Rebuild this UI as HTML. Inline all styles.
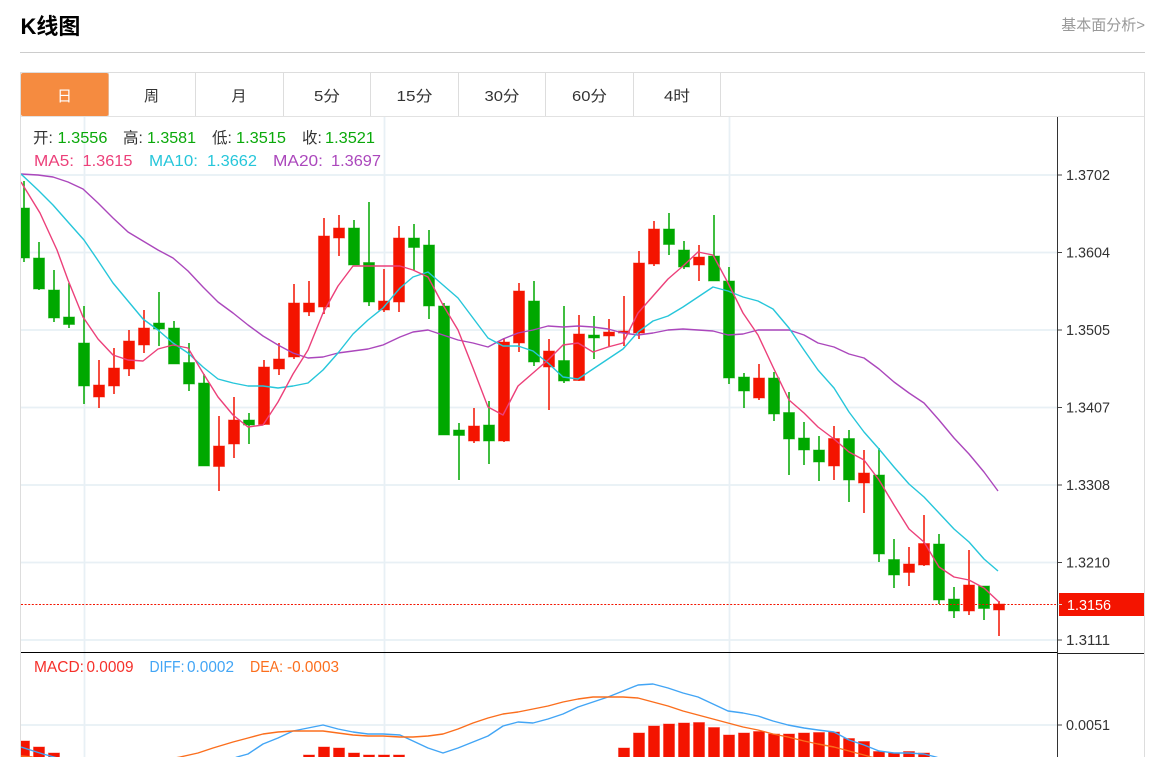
<!DOCTYPE html>
<html lang="zh"><head><meta charset="utf-8"><title>K线图</title>
<style>
html,body{margin:0;padding:0;background:#fff;width:1171px;height:757px;overflow:hidden}
svg{display:block;font-family:"Liberation Sans","Noto Sans CJK SC",sans-serif}
.tab{font-size:15px;fill:#333;text-anchor:middle}
.ax{font-size:14.5px;fill:#333}
.i{font-size:15.5px}
.g{fill:#0aa90a}.k{fill:#333}.p{fill:#ec407a}.c{fill:#26c6da}.u{fill:#ab47bc}.r{fill:#f5302a}.b{fill:#42a5f5}.o{fill:#fb6e1d}
</style></head><body>
<svg width="1171" height="757" viewBox="0 0 1171 757" xmlns="http://www.w3.org/2000/svg">
<defs><clipPath id="cl"><rect x="21" y="117" width="1036" height="640"/></clipPath></defs>
<text x="20.5" y="34" font-size="22" font-weight="bold" fill="#000">K线图</text>
<text x="1145" y="30" font-size="15" fill="#999" text-anchor="end">基本面分析&gt;</text>
<path d="M20 52.5H1145" stroke="#ccc" fill="none"/>

<path d="M20.5 757V72.5H1144.5V757" stroke="#ddd" fill="none"/>
<path d="M21 116.5H1144" stroke="#e2e2e2" fill="none"/>
<path d="M108.5 73V116M195.5 73V116M283.5 73V116M370.5 73V116M458.5 73V116M545.5 73V116M633.5 73V116M720.5 73V116" stroke="#ddd" fill="none"/>
<rect x="21" y="73" width="87.5" height="43" rx="2" fill="#f58b40"/>
<text class="tab" x="64.5" y="101" style="fill:#fff">日</text>
<text class="tab" x="151.5" y="101">周</text>
<text class="tab" x="239" y="101">月</text>
<text class="tab" x="327" y="101" textLength="26" lengthAdjust="spacingAndGlyphs">5分</text>
<text class="tab" x="414.5" y="101" textLength="36" lengthAdjust="spacingAndGlyphs">15分</text>
<text class="tab" x="502" y="101" textLength="35" lengthAdjust="spacingAndGlyphs">30分</text>
<text class="tab" x="589.5" y="101" textLength="35" lengthAdjust="spacingAndGlyphs">60分</text>
<text class="tab" x="677" y="101" textLength="26" lengthAdjust="spacingAndGlyphs">4时</text>

<g stroke="#e8f0f5" stroke-width="1.8" fill="none">
<path d="M21 175H1057M21 252.5H1057M21 330H1057M21 407.5H1057M21 485H1057M21 562.5H1057M21 640H1057M21 725H1057"/>
<path d="M84.5 117V757M384.5 117V757M729.5 117V757"/>
</g>

<g clip-path="url(#cl)">
<path stroke="#f41400" stroke-width="1.5" fill="none" d="M99 360V408M114 348V394M129 330V376M144 310V353M219 416V491M234 397V458M264 360V425M279 343V375M294 284V359M309 281V316M324 218V314M339 215V256M384 269V312M399 226V312M474 408V443M504 338V442M519 283V352M549 339V410M579 315V381M609 319V347M624 296V346M639 251V339M654 221V266M699 245V281M759 364V400M834 426V480M864 450V513M909 547V586M924 515V566M969 550V615M999 601V636"/>
<path stroke="#00a800" stroke-width="1.5" fill="none" d="M24 181V262M39 242V290M54 270V322M69 283V328M84 306V404M159 292V346M174 321V364M189 343V391M204 374V466M249 413V444M354 220V265M369 202V306M414 224V270M429 230V319M444 303V435M459 423V480M489 401V464M534 281V366M564 306V383M594 316V359M669 213V255M684 241V269M714 215V281M729 267V384M744 373V408M774 372V421M789 392V475M804 422V465M819 436V481M849 430V502M879 448V562M894 539V588M939 534V604M954 587V618M984 586V620"/>
<path fill="#f41400" stroke="#f41400" stroke-opacity=".45" d="M93.5 385H104.5V397H93.5ZM108.5 368H119.5V386H108.5ZM123.5 341H134.5V369H123.5ZM138.5 328H149.5V345H138.5ZM213.5 446H224.5V466.5H213.5ZM228.5 420H239.5V444H228.5ZM258.5 367H269.5V424.5H258.5ZM273.5 359H284.5V369H273.5ZM288.5 303H299.5V357H288.5ZM303.5 303H314.5V312H303.5ZM318.5 236H329.5V307H318.5ZM333.5 228H344.5V238H333.5ZM378.5 301H389.5V310H378.5ZM393.5 238H404.5V302H393.5ZM468.5 426H479.5V441H468.5ZM498.5 342H509.5V441H498.5ZM513.5 291H524.5V343H513.5ZM543.5 351H554.5V367H543.5ZM573.5 334H584.5V380.5H573.5ZM603.5 332H614.5V336H603.5ZM618.5 331H629.5V333H618.5ZM633.5 263H644.5V333H633.5ZM648.5 229H659.5V264H648.5ZM693.5 257H704.5V265H693.5ZM753.5 378H764.5V398H753.5ZM828.5 438.5H839.5V466H828.5ZM858.5 473H869.5V483H858.5ZM903.5 564H914.5V572.5H903.5ZM918.5 543.5H929.5V565H918.5ZM963.5 585H974.5V611H963.5ZM993.5 604H1004.5V610H993.5Z"/>
<path fill="#00a800" stroke="#00a800" stroke-opacity=".45" d="M18.5 208H29.5V258H18.5ZM33.5 258H44.5V289H33.5ZM48.5 290H59.5V318H48.5ZM63.5 317H74.5V324.5H63.5ZM78.5 343H89.5V386H78.5ZM153.5 323H164.5V329H153.5ZM168.5 328H179.5V364H168.5ZM183.5 362.5H194.5V384H183.5ZM198.5 383H209.5V466H198.5ZM243.5 420H254.5V425H243.5ZM348.5 228H359.5V265H348.5ZM363.5 262.5H374.5V302H363.5ZM408.5 238H419.5V247.5H408.5ZM423.5 245H434.5V306H423.5ZM438.5 306H449.5V435H438.5ZM453.5 430H464.5V435.5H453.5ZM483.5 425H494.5V441H483.5ZM528.5 301H539.5V362H528.5ZM558.5 360.5H569.5V381H558.5ZM588.5 335H599.5V338H588.5ZM663.5 229H674.5V244.5H663.5ZM678.5 250H689.5V267H678.5ZM708.5 256H719.5V281H708.5ZM723.5 281H734.5V378H723.5ZM738.5 377H749.5V391H738.5ZM768.5 378H779.5V414H768.5ZM783.5 412.5H794.5V439H783.5ZM798.5 438H809.5V450H798.5ZM813.5 450H824.5V462H813.5ZM843.5 438.5H854.5V480H843.5ZM873.5 475H884.5V554H873.5ZM888.5 559.5H899.5V575H888.5ZM933.5 544H944.5V600H933.5ZM948.5 599H959.5V611H948.5ZM978.5 586H989.5V608.5H978.5Z"/>

<g fill="none" stroke-width="1.4" stroke-linejoin="round">
<polyline stroke="#ab47bc" points="21,174 38,175 53,177 68,182 83,189 98,203 113,218 128,232 143,241 158,250 173,258 188,271 203,287 218,302 233,313 248,325 263,336 278,345 293,353 308,358 323,357 338,353 353,351 368,349 383,345 400,337 413,332 428,330 443,335 458,340 473,343 488,347 503,339 518,333 533,330 548,326 563,327 578,326 593,327 608,329 623,333 638,335 653,333 668,330 683,329 698,330 713,331 728,335 743,334 758,330 773,330 789,330 804,335 818,343 834,347 849,354 864,358 879,369 894,382 909,393 924,403 939,420 954,438 969,454 984,472 998,491"/>
<polyline stroke="#26c6da" points="21,174 38,190 53,205 68,222 84,240 97,259 113,283 128,301 143,319 158,330 173,343 188,353 203,367 218,379 233,383 248,386 263,386 278,388 293,386 308,383 323,370 338,353 353,334 368,320 383,308 400,288 413,277 428,272 443,285 458,298 473,318 488,338 503,346 518,346 533,351 548,363 563,377 578,379 593,369 608,359 623,349 638,332 653,321 668,316 683,307 698,297 713,287 728,291 743,297 758,301 773,309 789,328 804,350 818,370 834,388 849,412 864,432 879,449 894,467 909,484 924,497 939,513 954,529 969,542 984,559 998,571"/>
<polyline stroke="#ec407a" points="21,182 40,213 57,250 68,280 83,317 98,339 113,355 128,360 143,361 158,349 173,345 188,348 203,373 218,397 233,415 248,427 263,425 278,402 293,374 308,350 323,313 338,286 353,266 368,266 383,266 400,266 413,270 428,277 443,305 458,330 473,368 488,407 503,415 518,386 533,373 548,360 563,345 578,343 593,352 608,347 623,343 638,313 653,296 668,279 683,266 698,252 713,255 728,283 743,313 758,335 773,367 789,400 804,413 818,427 834,439 849,452 864,460 879,480 894,505 909,529 924,542 939,567 954,577 969,580 984,588 999,602"/>
</g>

<path d="M21 604.5H1056" stroke="#f41400" stroke-width="1" stroke-dasharray="2 1.6" fill="none"/>

<path fill="#f41400" stroke="#f41400" stroke-opacity=".4" d="M18.5 741H29.5V760H18.5ZM33.5 747H44.5V760H33.5ZM48.5 753H59.5V760H48.5ZM303.5 755H314.5V760H303.5ZM318.5 747H329.5V760H318.5ZM333.5 748H344.5V760H333.5ZM348.5 753H359.5V760H348.5ZM363.5 755H374.5V760H363.5ZM378.5 755H389.5V760H378.5ZM393.5 755H404.5V760H393.5ZM618.5 748H629.5V760H618.5ZM633.5 733H644.5V760H633.5ZM648.5 726H659.5V760H648.5ZM663.5 724H674.5V760H663.5ZM678.5 723H689.5V760H678.5ZM693.5 722.5H704.5V760H693.5ZM708.5 727.5H719.5V760H708.5ZM723.5 735H734.5V760H723.5ZM738.5 733H749.5V760H738.5ZM753.5 731.5H764.5V760H753.5ZM768.5 734H779.5V760H768.5ZM783.5 734H794.5V760H783.5ZM798.5 733H809.5V760H798.5ZM813.5 732.5H824.5V760H813.5ZM828.5 732H839.5V760H828.5ZM843.5 738.5H854.5V760H843.5ZM858.5 741.5H869.5V760H858.5ZM873.5 751.5H884.5V760H873.5ZM888.5 753H899.5V760H888.5ZM903.5 751.5H914.5V760H903.5ZM918.5 753H929.5V760H918.5Z"/>
<g fill="none" stroke-width="1.4" stroke-linejoin="round">
<polyline stroke="#42a5f5" points="21,747 43,754 54,757 72,762"/>
<polyline stroke="#42a5f5" points="225,762 237,757 248,754 263,744 278,738 293,731 308,728 323,725 338,729 353,732 368,734 383,734 400,735 413,741 428,748 443,753 458,748 473,742 488,736 503,726 518,722 533,723 548,719 563,714 578,707 593,702 608,697 623,691 638,685 653,684 668,688 683,693 698,697 713,704 728,711 743,713 758,716 773,721 788,725 804,728 818,730 834,732 849,740 864,745 879,751 894,753 909,753 924,754 936,757 950,762"/>
<polyline stroke="#fb6e1d" points="21,756 32,757 40,760"/>
<polyline stroke="#fb6e1d" points="165,760 180,757 198,753 213,748 233,742 248,738 263,734 278,732 293,731 308,731 323,731 338,733 353,735 368,736 383,736 400,737 413,737 428,736 443,734 458,729 473,723 488,718 503,714 518,712 533,709 548,706 563,702 578,699 593,697 608,697 623,697 638,698 653,702 668,706 683,711 698,715 713,719 728,723 743,727 758,730 773,734 788,737 804,741 818,744 834,747 849,751 864,755 871,757 885,760"/>
</g>
</g>

<path d="M21 652.5H1057" stroke="#000" fill="none"/>
<path d="M1057 653.5H1144" stroke="#222" fill="none"/>
<path d="M1057.5 117V757" stroke="#333" fill="none"/>
<path d="M1058 175H1062M1058 252.5H1062M1058 330H1062M1058 407.5H1062M1058 485H1062M1058 562.5H1062M1058 640H1062M1058 725H1062" stroke="#444" fill="none"/>
<rect x="1059" y="593" width="85" height="23" fill="#f41400"/>
<path d="M1058 604.5H1062" stroke="#ddd" fill="none"/>

<g lengthAdjust="spacingAndGlyphs">
<text class="ax" x="1066" y="180" textLength="44" lengthAdjust="spacingAndGlyphs">1.3702</text>
<text class="ax" x="1066" y="257.5" textLength="44" lengthAdjust="spacingAndGlyphs">1.3604</text>
<text class="ax" x="1066" y="335" textLength="44" lengthAdjust="spacingAndGlyphs">1.3505</text>
<text class="ax" x="1066" y="412.5" textLength="44" lengthAdjust="spacingAndGlyphs">1.3407</text>
<text class="ax" x="1066" y="490" textLength="44" lengthAdjust="spacingAndGlyphs">1.3308</text>
<text class="ax" x="1066" y="567.5" textLength="44" lengthAdjust="spacingAndGlyphs">1.3210</text>
<text class="ax" x="1067" y="610" textLength="44" lengthAdjust="spacingAndGlyphs" style="fill:#fff">1.3156</text>
<text class="ax" x="1066" y="645" textLength="44" lengthAdjust="spacingAndGlyphs">1.3111</text>
<text class="ax" x="1066" y="730" textLength="44" lengthAdjust="spacingAndGlyphs">0.0051</text>
</g>

<g class="i">
<text class="k" x="33" y="143">开:</text><text class="g" x="57.5" y="143" textLength="50" lengthAdjust="spacingAndGlyphs">1.3556</text>
<text class="k" x="123" y="143">高:</text><text class="g" x="147" y="143" textLength="49" lengthAdjust="spacingAndGlyphs">1.3581</text>
<text class="k" x="212" y="143">低:</text><text class="g" x="236" y="143" textLength="50" lengthAdjust="spacingAndGlyphs">1.3515</text>
<text class="k" x="302" y="143">收:</text><text class="g" x="325" y="143" textLength="50" lengthAdjust="spacingAndGlyphs">1.3521</text>
<text class="p" x="34" y="166" textLength="40" lengthAdjust="spacingAndGlyphs">MA5:</text><text class="p" x="82.5" y="166" textLength="50" lengthAdjust="spacingAndGlyphs">1.3615</text>
<text class="c" x="149" y="166" textLength="49" lengthAdjust="spacingAndGlyphs">MA10:</text><text class="c" x="207" y="166" textLength="50" lengthAdjust="spacingAndGlyphs">1.3662</text>
<text class="u" x="273" y="166" textLength="50" lengthAdjust="spacingAndGlyphs">MA20:</text><text class="u" x="331" y="166" textLength="50" lengthAdjust="spacingAndGlyphs">1.3697</text>
<text class="r" x="34" y="672" textLength="50" lengthAdjust="spacingAndGlyphs">MACD:</text><text class="r" x="86.5" y="672" textLength="47" lengthAdjust="spacingAndGlyphs">0.0009</text>
<text class="b" x="149.5" y="672" textLength="35" lengthAdjust="spacingAndGlyphs">DIFF:</text><text class="b" x="187" y="672" textLength="47" lengthAdjust="spacingAndGlyphs">0.0002</text>
<text class="o" x="250" y="672" textLength="33" lengthAdjust="spacingAndGlyphs">DEA:</text><text class="o" x="287" y="672" textLength="52" lengthAdjust="spacingAndGlyphs">-0.0003</text>
</g>
</svg>
</body></html>
